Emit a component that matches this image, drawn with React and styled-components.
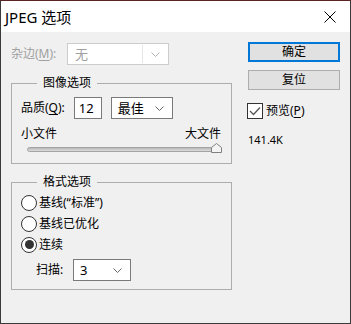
import React, { useState } from "react";
import styled, { createGlobalStyle } from "styled-components";

const GlobalStyle = createGlobalStyle`
  html, body {
    margin: 0;
    padding: 0;
    background: #2b2b2b;
  }
  * {
    box-sizing: border-box;
  }
`;

const FONT = `"Noto Sans", "Noto Sans CJK SC", sans-serif`;

const Window = styled.div`
  width: 351px;
  height: 324px;
  border: 1px solid #3a3a3a;
  border-top-color: #5a2424;
  background: #f0f0f0;
  font-family: ${FONT};
  font-size: 12px;
  color: #000;
  display: flex;
  flex-direction: column;
`;

const TitleBar = styled.div`
  height: 31px;
  background: #fff;
  display: flex;
  align-items: center;
  justify-content: space-between;
  padding: 0 14px 0 4px;
`;

const Title = styled.div`
  font-size: 15px;
  line-height: 20px;
`;

const Body = styled.div`
  display: flex;
  gap: 16px;
  padding: 10px 0 0 10px;
`;

const LeftCol = styled.div`
  width: 221px;
  display: flex;
  flex-direction: column;
`;

const RightCol = styled.div`
  width: 92px;
  display: flex;
  flex-direction: column;
`;

const FormRow = styled.div`
  display: flex;
  align-items: center;
  height: 22px;
  margin-top: ${(p) => p.$top || 0}px;
  padding-left: ${(p) => p.$indent || 0}px;
`;

const Label = styled.span`
  color: ${(p) => (p.$disabled ? "#a0a0a0" : "#000")};
  width: ${(p) => (p.$width ? `${p.$width}px` : "auto")};
  flex-shrink: 0;
  white-space: nowrap;
  line-height: 16px;
`;

const Mnemonic = styled.span`
  text-decoration: underline;
  text-underline-offset: 2px;
`;

const SelectBox = styled.div`
  width: ${(p) => p.$width}px;
  height: 22px;
  background: #fff;
  border: 1px solid ${(p) => (p.$disabled ? "#cccccc" : "#7a7a7a")};
  margin-left: ${(p) => p.$gap || 0}px;
  display: flex;
  align-items: center;
  justify-content: space-between;
  padding: ${(p) => (p.$disabled ? "1px 8px 1px 1px" : "0 8px 0 6px")};
`;

const SelectField = styled.div`
  flex: 1;
  height: 100%;
  display: flex;
  align-items: center;
  padding-left: 6px;
  margin-right: 8px;
  border-right: 1px solid #e6e6e6;
  color: #a0a0a0;
`;

const SelectText = styled.span`
  line-height: 16px;
  font-size: ${(p) => p.$size || 12}px;
`;

const NumberInput = styled.div`
  width: 28px;
  height: 22px;
  margin-left: 9px;
  background: #fff;
  border: 1px solid #7a7a7a;
  display: flex;
  align-items: center;
  padding-left: 4px;
  font-size: 13px;
`;

const Group = styled.fieldset`
  margin: ${(p) => p.$top}px 0 0 0;
  padding: 0 0 ${(p) => p.$bottom}px 9px;
  border: 1px solid #adadad;
  min-width: 0;
`;

const GroupLegend = styled.legend`
  margin-left: 16px;
  padding: 0 6px;
  line-height: 16px;
  font-size: 12px;
`;

const SliderLabels = styled.div`
  display: flex;
  justify-content: space-between;
  width: 200px;
  margin-top: 8px;
  line-height: 14px;
`;

const SliderArea = styled.div`
  position: relative;
  height: 14px;
  width: 194px;
  margin-left: 6px;
`;

const SliderTrack = styled.div`
  position: absolute;
  left: 0;
  right: 0;
  top: 6px;
  height: 5px;
  border-radius: 3px;
  border: 1px solid #a3a3a3;
  background: linear-gradient(#b8b8b8, #dcdcdc);
`;

const SliderThumb = styled.svg`
  position: absolute;
  right: -1px;
  top: 2px;
`;

const RadioRow = styled.div`
  display: flex;
  align-items: center;
  height: 21px;
  gap: 2px;
  margin-top: ${(p) => p.$top || 0}px;
`;

const RadioCircle = styled.span`
  width: 16px;
  height: 16px;
  border-radius: 50%;
  border: 1px solid #333;
  background: #fff;
  display: flex;
  align-items: center;
  justify-content: center;

  &::after {
    content: "";
    width: 9px;
    height: 9px;
    border-radius: 50%;
    background: #333;
    display: ${(p) => (p.$checked ? "block" : "none")};
  }
`;

const DialogButton = styled.div`
  height: 20px;
  margin-top: ${(p) => p.$top || 0}px;
  background: #e1e1e1;
  border: ${(p) => (p.$primary ? "2px solid #0078d7" : "1px solid #adadad")};
  display: flex;
  align-items: center;
  justify-content: center;
  line-height: 16px;
`;

const CheckRow = styled.div`
  display: flex;
  align-items: center;
  gap: 3px;
  margin-top: 13px;
  margin-left: -1px;
`;

const CheckBox = styled.span`
  width: 16px;
  height: 16px;
  border: 1px solid #333;
  background: #fff;
  display: flex;
  align-items: center;
  justify-content: center;
`;

const SizeText = styled.div`
  margin-top: 14px;
  font-size: 11px;
  line-height: 14px;
`;

const Chevron = ({ color }) => (
  <svg width="9" height="5" viewBox="0 0 9 5">
    <path d="M0.5 0.5 L4.5 4.5 L8.5 0.5" fill="none" stroke={color} strokeWidth="1" />
  </svg>
);

const radios = ["基线(\u201C标准\u201D)", "基线已优化", "连续"];

export default function App() {
  const [format, setFormat] = useState(2);
  const [preview, setPreview] = useState(true);

  return (
    <>
      <GlobalStyle />
      <Window>
        <TitleBar>
          <Title>JPEG 选项</Title>
          <svg width="12" height="12" viewBox="0 0 12 12">
            <path d="M0.5 0.5 L11.5 11.5 M11.5 0.5 L0.5 11.5" stroke="#000" strokeWidth="1" />
          </svg>
        </TitleBar>
        <Body>
          <LeftCol>
            <FormRow $top={1}>
              <Label $disabled $width={56}>
                杂边(<Mnemonic>M</Mnemonic>):
              </Label>
              <SelectBox $width={102} $disabled>
                <SelectField>
                  <SelectText $size={13}>无</SelectText>
                </SelectField>
                <Chevron color="#b0b0b0" />
              </SelectBox>
            </FormRow>

            <Group $top={10} $bottom={8}>
              <GroupLegend>图像选项</GroupLegend>
              <FormRow $top={6}>
                <Label>
                  品质(<Mnemonic>Q</Mnemonic>):
                </Label>
                <NumberInput>12</NumberInput>
                <SelectBox $width={62} $gap={9}>
                  <SelectText $size={13}>最佳</SelectText>
                  <Chevron color="#666" />
                </SelectBox>
              </FormRow>
              <SliderLabels>
                <span>小文件</span>
                <span>大文件</span>
              </SliderLabels>
              <SliderArea>
                <SliderTrack />
                <SliderThumb width="11" height="10" viewBox="0 0 11 10">
                  <path
                    d="M0.5 9.5 L0.5 4.5 L5.5 0.5 L10.5 4.5 L10.5 9.5 Z"
                    fill="#f4f4f4"
                    stroke="#808080"
                  />
                </SliderThumb>
              </SliderArea>
            </Group>

            <Group $top={10} $bottom={8}>
              <GroupLegend>格式选项</GroupLegend>
              {radios.map((r, i) => (
                <RadioRow key={r} $top={i === 0 ? 2 : 0} onClick={() => setFormat(i)}>
                  <RadioCircle $checked={format === i} />
                  <Label>{r}</Label>
                </RadioRow>
              ))}
              <FormRow $top={4} $indent={15}>
                <Label $width={37}>扫描:</Label>
                <SelectBox $width={58}>
                  <SelectText $size={13}>3</SelectText>
                  <Chevron color="#666" />
                </SelectBox>
              </FormRow>
            </Group>
          </LeftCol>

          <RightCol>
            <DialogButton $primary>确定</DialogButton>
            <DialogButton $top={8}>复位</DialogButton>
            <CheckRow onClick={() => setPreview(!preview)}>
              <CheckBox>
                {preview && (
                  <svg width="12" height="10" viewBox="0 0 12 10">
                    <path d="M1 5 L4.5 8.5 L11 1.5" fill="none" stroke="#555" strokeWidth="1.3" />
                  </svg>
                )}
              </CheckBox>
              <Label>
                预览(<Mnemonic>P</Mnemonic>)
              </Label>
            </CheckRow>
            <SizeText>141.4K</SizeText>
          </RightCol>
        </Body>
      </Window>
    </>
  );
}
